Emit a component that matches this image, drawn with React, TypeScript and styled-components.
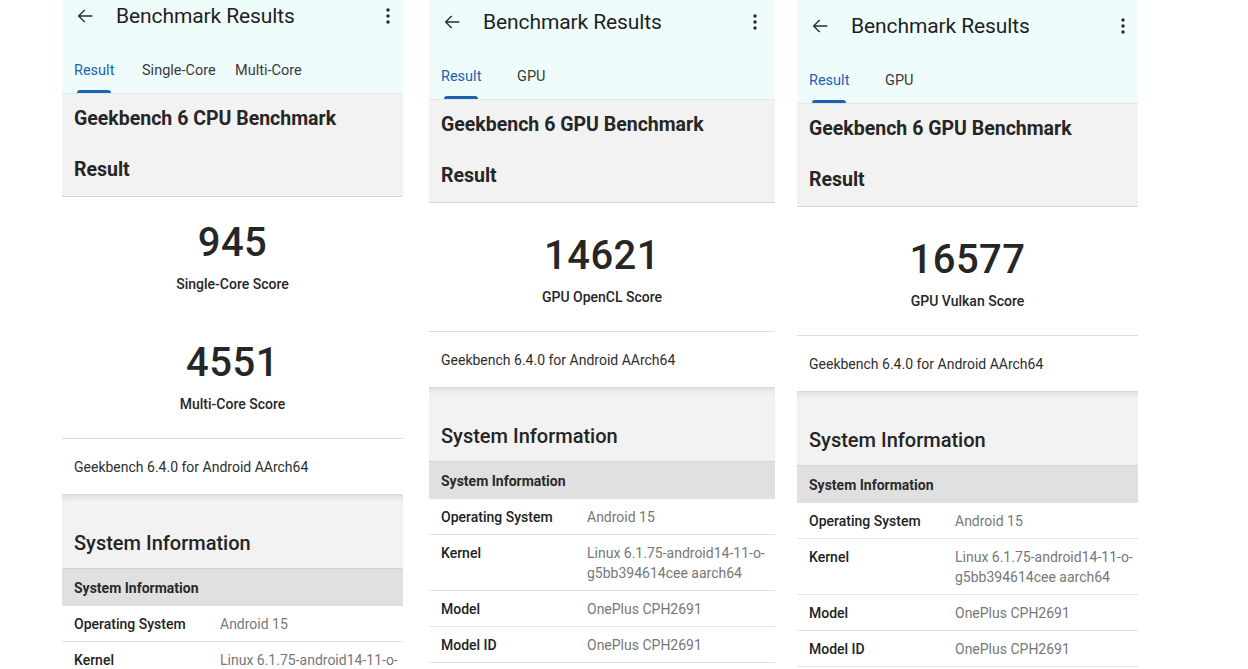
import React from 'react';
import styled, { createGlobalStyle } from 'styled-components';

const GlobalStyle = createGlobalStyle`
	html, body {
		margin: 0;
		padding: 0;
		background: #ffffff;
		font-family: Roboto, 'Noto Sans', 'Liberation Sans', sans-serif;
		color: #212121;
		overflow: hidden;
	}
`;

interface TabDef {
	label: string;
	width?: number;
}

interface ScoreDef {
	value: string;
	label: string;
}

interface InfoRow {
	label: string;
	value: string[];
}

interface ScreenDef {
	key: string;
	width: number;
	gapBefore: number;
	shift: number;
	scoreTop: number;
	tabs: TabDef[];
	benchmark: string;
	scores: ScoreDef[];
}

const SYSTEM_ROWS: InfoRow[] = [
	{ label: 'Operating System', value: ['Android 15'] },
	{ label: 'Kernel', value: ['Linux 6.1.75-android14-11-o-', 'g5bb394614cee aarch64'] },
	{ label: 'Model', value: ['OnePlus CPH2691'] },
	{ label: 'Model ID', value: ['OnePlus CPH2691'] }
];

const SCREENS: ScreenDef[] = [
	{
		key: 'cpu',
		width: 341,
		gapBefore: 62,
		shift: -10,
		scoreTop: 22,
		tabs: [
			{ label: 'Result', width: 68 },
			{ label: 'Single-Core', width: 93 },
			{ label: 'Multi-Core' }
		],
		benchmark: 'Geekbench 6 CPU Benchmark',
		scores: [
			{ value: '945', label: 'Single-Core Score' },
			{ value: '4551', label: 'Multi-Core Score' }
		]
	},
	{
		key: 'opencl',
		width: 346,
		gapBefore: 26,
		shift: -4,
		scoreTop: 29,
		tabs: [{ label: 'Result', width: 76 }, { label: 'GPU' }],
		benchmark: 'Geekbench 6 GPU Benchmark',
		scores: [{ value: '14621', label: 'GPU OpenCL Score' }]
	},
	{
		key: 'vulkan',
		width: 341,
		gapBefore: 22,
		shift: 0,
		scoreTop: 29,
		tabs: [{ label: 'Result', width: 76 }, { label: 'GPU' }],
		benchmark: 'Geekbench 6 GPU Benchmark',
		scores: [{ value: '16577', label: 'GPU Vulkan Score' }]
	}
];

const Page = styled.div`
	display: flex;
	align-items: flex-start;
	height: 669px;
	overflow: hidden;
`;

const Panel = styled.div<{ $width: number; $gapBefore: number }>`
	flex: 0 0 ${(p) => p.$width}px;
	width: ${(p) => p.$width}px;
	margin-left: ${(p) => p.$gapBefore}px;
	height: 669px;
	overflow: hidden;
	background: #ffffff;
`;

const Screen = styled.div<{ $shift: number }>`
	margin-top: ${(p) => p.$shift}px;
	display: flex;
	flex-direction: column;
`;

const AppBar = styled.header`
	background: #effcfc;
	border-bottom: 1px solid #e2e8e8;
`;

const Toolbar = styled.div`
	width: 348px;
	box-sizing: border-box;
	height: 52px;
	display: flex;
	align-items: center;
	padding: 0 11px 0 12px;
`;

const IconButton = styled.span`
	display: inline-flex;
	align-items: center;
	justify-content: center;
	width: 22px;
	height: 22px;
	color: #2b2b2b;
`;

const Title = styled.h1`
	margin: 0 0 0 20px;
	font-size: 21px;
	font-weight: 400;
	letter-spacing: -0.1px;
	color: #1f1f1f;
	flex: 1;
`;

const Tabs = styled.nav`
	display: flex;
	align-items: flex-end;
	height: 51px;
	padding-left: 12px;
`;

const Tab = styled.div<{ $active: boolean; $w?: number }>`
	position: relative;
	height: 46px;
	display: flex;
	align-items: center;
	flex: 0 0 ${(p) => (p.$w ? `${p.$w}px` : 'auto')};
	font-size: 14.5px;
	font-weight: 400;
	color: ${(p) => (p.$active ? '#1c62b3' : '#3a3a3a')};

	&::after {
		content: '';
		display: ${(p) => (p.$active ? 'block' : 'none')};
		position: absolute;
		left: 3px;
		bottom: 0;
		width: 34px;
		height: 3px;
		border-radius: 3px 3px 0 0;
		background: #1c62b3;
	}
`;

const HeadSection = styled.section`
	background: #f2f2f2;
	padding: 12px 12px 13px;
	border-bottom: 1px solid #d5d5d5;
	display: flex;
	flex-direction: column;
	gap: 25px;
`;

const HeadTitle = styled.h2`
	margin: 0;
	font-size: 19.5px;
	line-height: 26px;
	font-weight: 700;
	color: #262626;
`;

const ScoreBox = styled.section<{ $top: number }>`
	padding: ${(p) => p.$top}px 0 24px;
	border-bottom: 1px solid #dedede;
	display: flex;
	flex-direction: column;
	align-items: center;
	gap: 45px;
`;

const Score = styled.div`
	display: flex;
	flex-direction: column;
	align-items: center;
	gap: 7px;
`;

const ScoreValue = styled.div`
	font-size: 40px;
	line-height: 48px;
	font-weight: 500;
	color: #262626;
	letter-spacing: 0.5px;
`;

const ScoreLabel = styled.div`
	font-size: 14px;
	line-height: 20px;
	font-weight: 500;
	color: #262626;
`;

const VersionRow = styled.div`
	height: 55px;
	display: flex;
	align-items: center;
	padding: 0 12px;
	font-size: 14px;
	color: #2e2e2e;
	border-bottom: 1px solid #d9d9d9;
`;

const InfoSection = styled.section`
	background: #f2f2f2;
	box-shadow: inset 0 6px 7px -5px rgba(0, 0, 0, 0.12);
	padding: 34px 12px 11px;
	border-bottom: 1px solid #d3d3d3;
`;

const InfoTitle = styled.h2`
	margin: 0;
	font-size: 20px;
	line-height: 28px;
	font-weight: 500;
	color: #242424;
`;

const TableHead = styled.div`
	height: 37px;
	display: flex;
	align-items: center;
	padding: 0 12px;
	background: #e0e0e0;
	font-size: 14px;
	font-weight: 700;
	color: #2a2a2a;
`;

const Row = styled.div`
	display: grid;
	grid-template-columns: 146px 1fr;
	padding: 8px 12px 7px;
	border-bottom: 1px solid #e3e3e3;
	font-size: 14px;
	line-height: 20px;
`;

const RowLabel = styled.div`
	font-weight: 500;
	color: #222222;
`;

const RowValue = styled.div`
	color: #777777;
	white-space: nowrap;
`;

const ArrowBack = () => (
	<svg width="22" height="22" viewBox="0 0 24 24" fill="currentColor">
		<path d="M20 11.25H6.9l5.3-5.3-1.06-1.06L4.03 12l7.11 7.11 1.06-1.06-5.3-5.3H20z" />
	</svg>
);

const MoreVert = () => (
	<svg width="22" height="22" viewBox="0 0 24 24" fill="currentColor">
		<circle cx="12" cy="5.5" r="1.9" />
		<circle cx="12" cy="12" r="1.9" />
		<circle cx="12" cy="18.5" r="1.9" />
	</svg>
);

const ResultScreen = ({ screen }: { screen: ScreenDef }) => (
	<Panel $width={screen.width} $gapBefore={screen.gapBefore}>
		<Screen $shift={screen.shift}>
			<AppBar>
				<Toolbar>
					<IconButton>
						<ArrowBack />
					</IconButton>
					<Title>Benchmark Results</Title>
					<IconButton>
						<MoreVert />
					</IconButton>
				</Toolbar>
				<Tabs>
					{screen.tabs.map((tab, i) => (
						<Tab key={tab.label} $active={i === 0} $w={tab.width}>
							{tab.label}
						</Tab>
					))}
				</Tabs>
			</AppBar>
			<HeadSection>
				<HeadTitle>{screen.benchmark}</HeadTitle>
				<HeadTitle>Result</HeadTitle>
			</HeadSection>
			<ScoreBox $top={screen.scoreTop}>
				{screen.scores.map((s) => (
					<Score key={s.label}>
						<ScoreValue>{s.value}</ScoreValue>
						<ScoreLabel>{s.label}</ScoreLabel>
					</Score>
				))}
			</ScoreBox>
			<VersionRow>Geekbench 6.4.0 for Android AArch64</VersionRow>
			<InfoSection>
				<InfoTitle>System Information</InfoTitle>
			</InfoSection>
			<TableHead>System Information</TableHead>
			{SYSTEM_ROWS.map((row) => (
				<Row key={row.label}>
					<RowLabel>{row.label}</RowLabel>
					<RowValue>
						{row.value.map((line) => (
							<div key={line}>{line}</div>
						))}
					</RowValue>
				</Row>
			))}
		</Screen>
	</Panel>
);

export default function App() {
	return (
		<>
			<GlobalStyle />
			<Page>
				{SCREENS.map((screen) => (
					<ResultScreen key={screen.key} screen={screen} />
				))}
			</Page>
		</>
	);
}
